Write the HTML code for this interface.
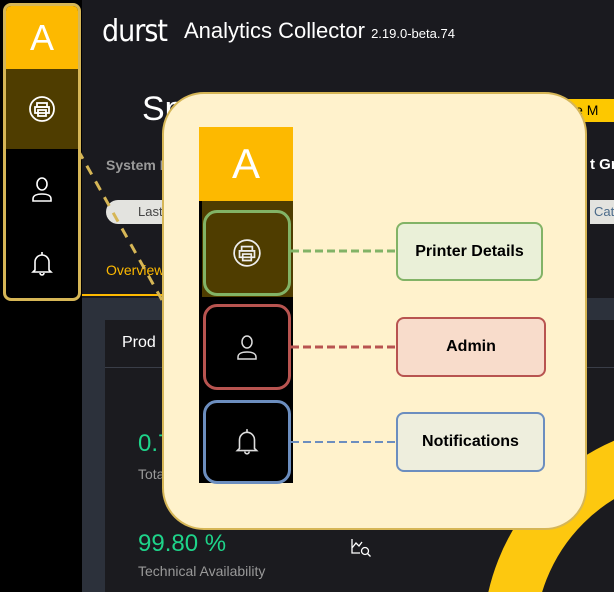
<!DOCTYPE html>
<html style="overflow:hidden"><head><meta charset="utf-8"><style>
*{margin:0;padding:0;box-sizing:border-box}
html,body{width:614px;height:592px;overflow:hidden}
body{background:#1a1a1f;font-family:"Liberation Sans",sans-serif;position:relative}
.a{position:absolute}
.lbl{position:absolute;border:2px solid;border-radius:8px;font-weight:bold;font-size:16px;color:#000;display:flex;align-items:center;justify-content:center}
</style></head><body>
<div class="a" style="left:0;top:0;width:82px;height:592px;background:#000"></div>
<div class="a" style="left:82px;top:298px;width:532px;height:294px;background:#2c313b"></div>
<div class="a" style="left:105px;top:320px;width:509px;height:272px;background:#1b1b1f"></div>
<div class="a" style="left:105px;top:367px;width:509px;height:1px;background:#3a3e48"></div>
<div class="a" style="left:122px;top:334px;color:#fff;font-size:16px">Prod</div>
<div class="a" style="left:82px;top:294px;width:85px;height:2px;background:#fdb900"></div>
<div class="a" style="left:102px;top:14px;color:#fff;font-size:30px;letter-spacing:-1px;font-family:'DejaVu Sans Condensed','Liberation Sans',sans-serif">durst</div>
<div class="a" style="left:184px;top:18px;color:#fff;font-size:22px">Analytics Collector <span style="font-size:13px">2.19.0-beta.74</span></div>
<div class="a" style="left:142px;top:90px;color:#fff;font-size:34px">Sp</div>
<div class="a" style="left:555px;top:99px;width:59px;height:23px;background:#fdc800;color:#000;font-size:14px;padding:3px 0 0 10px;white-space:nowrap;overflow:hidden">ice M</div>
<div class="a" style="left:106px;top:157px;color:#9a9a9a;font-size:14px;font-weight:bold">System I</div>
<div class="a" style="left:590px;top:156px;width:24px;overflow:hidden;color:#fff;font-size:15px;font-weight:bold;white-space:nowrap">t Gr</div>
<div class="a" style="left:106px;top:200px;width:70px;height:24px;background:#e3e3df;border-radius:12px 0 0 12px;color:#444;font-size:13px;padding:4px 0 0 32px">Last</div>
<div class="a" style="left:590px;top:200px;width:24px;height:24px;background:#e3e3df;color:#4a6a8a;font-size:13px;padding:4px 0 0 4px;overflow:hidden;white-space:nowrap">Cat</div>
<div class="a" style="left:106px;top:262px;color:#fdb900;font-size:14px">Overview</div>
<div class="a" style="left:138px;top:430px;color:#1ed48a;font-size:24px">0.7</div>
<div class="a" style="left:138px;top:466px;color:#999;font-size:14px">Tota</div>
<div class="a" style="left:138px;top:530px;color:#1ed48a;font-size:24px">99.80 %</div>
<div class="a" style="left:138px;top:563px;color:#999;font-size:14px">Technical Availability</div>
<svg class="a" style="left:350px;top:538px" width="24" height="20" viewBox="0 0 24 20" fill="none" stroke="#fff" stroke-width="1.3"><path d="M2 1v14h8M2 10l4-5 3 3 3-4"/><circle cx="15" cy="13" r="3.5"/><path d="M17.5 15.5l3 3"/></svg>
<svg class="a" style="left:0;top:0" width="614" height="592"><circle cx="700" cy="640" r="191" fill="none" stroke="#fdc80f" stroke-width="52"/>
<line x1="78" y1="150" x2="162" y2="300" stroke="#d6b656" stroke-width="3" stroke-dasharray="10,8"/></svg>
<div class="a" style="left:3px;top:3px;width:78px;height:298px;border:3px solid #d6b656;border-radius:8px;overflow:hidden;background:#000">
 <div style="height:63px;background:#fdb900;color:#fff;font-size:36px;text-align:center;line-height:63px">A</div>
 <div style="height:80px;background:#4f3d00;display:flex;align-items:center;justify-content:center">
  <svg width="28" height="28" viewBox="0 0 28 28" fill="none" stroke="#fff" stroke-width="1.8"><circle cx="14" cy="14" r="12"/><rect x="9" y="8" width="10" height="4"/><rect x="7" y="12" width="14" height="6"/><rect x="10" y="15" width="8" height="6"/></svg></div>
 <div style="height:80px;display:flex;align-items:center;justify-content:center">
  <svg width="24" height="28" viewBox="0 0 24 28" fill="none" stroke="#fff" stroke-width="1.6"><ellipse cx="12" cy="9" rx="5" ry="6"/><path d="M3 26v-2c0-3 3-5 9-5s9 2 9 5v2z"/></svg></div>
 <div style="height:70px;display:flex;align-items:center;justify-content:center">
  <svg width="24" height="28" viewBox="0 0 24 28" fill="none" stroke="#fff" stroke-width="1.6"><path d="M12 2v3M5 20v-8a7 7 0 0114 0v8l2 2H3z"/><path d="M10 23a2 2 0 004 0"/></svg></div>
</div>
<div class="a" style="left:162px;top:92px;width:425px;height:438px;background:#fff2cc;border:2px solid #d6b656;border-radius:42px"></div>
<div class="a" style="left:199px;top:127px;width:94px;height:356px;background:#000">
 <div style="height:74px;background:#fdb900;color:#fff;font-size:42px;text-align:center;line-height:74px">A</div>
 <div style="height:96px;background:#4f3d00;margin-left:3px"></div>
</div>
<div class="a" style="left:203px;top:210px;width:88px;height:86px;border:3px solid #82b366;border-radius:14px;display:flex;align-items:center;justify-content:center">
 <svg width="30" height="30" viewBox="0 0 28 28" fill="none" stroke="#eee" stroke-width="1.6"><circle cx="14" cy="14" r="12"/><rect x="9" y="8" width="10" height="4"/><rect x="7" y="12" width="14" height="6"/><rect x="10" y="15" width="8" height="6"/></svg></div>
<div class="a" style="left:203px;top:304px;width:88px;height:86px;border:3px solid #b85450;border-radius:14px;display:flex;align-items:center;justify-content:center">
 <svg width="24" height="32" viewBox="0 0 24 28" fill="none" stroke="#ddd" stroke-width="1.5"><ellipse cx="12" cy="9" rx="5" ry="6"/><path d="M3 26v-2c0-3 3-5 9-5s9 2 9 5v2z"/></svg></div>
<div class="a" style="left:203px;top:400px;width:88px;height:84px;border:3px solid #6c8ebf;border-radius:14px;display:flex;align-items:center;justify-content:center">
 <svg width="26" height="30" viewBox="0 0 24 28" fill="none" stroke="#ddd" stroke-width="1.5"><path d="M12 2v3M5 20v-8a7 7 0 0114 0v8l2 2H3z"/><path d="M10 23a2 2 0 004 0"/></svg></div>
<svg class="a" style="left:0;top:0" width="614" height="592">
<line x1="291" y1="251" x2="396" y2="251" stroke="#82b366" stroke-width="3" stroke-dasharray="8,4"/>
<line x1="291" y1="347" x2="396" y2="347" stroke="#b85450" stroke-width="3" stroke-dasharray="8,4"/>
<line x1="291" y1="442" x2="396" y2="442" stroke="#6c8ebf" stroke-width="2" stroke-dasharray="8,4"/></svg>
<div class="lbl" style="left:396px;top:222px;width:147px;height:59px;border-color:#82b366;background:#eaf0d8">Printer Details</div>
<div class="lbl" style="left:396px;top:317px;width:150px;height:60px;border-color:#b85450;background:#f8dccb">Admin</div>
<div class="lbl" style="left:396px;top:412px;width:149px;height:60px;border-color:#6c8ebf;background:#eeeedd">Notifications</div>
</body></html>
